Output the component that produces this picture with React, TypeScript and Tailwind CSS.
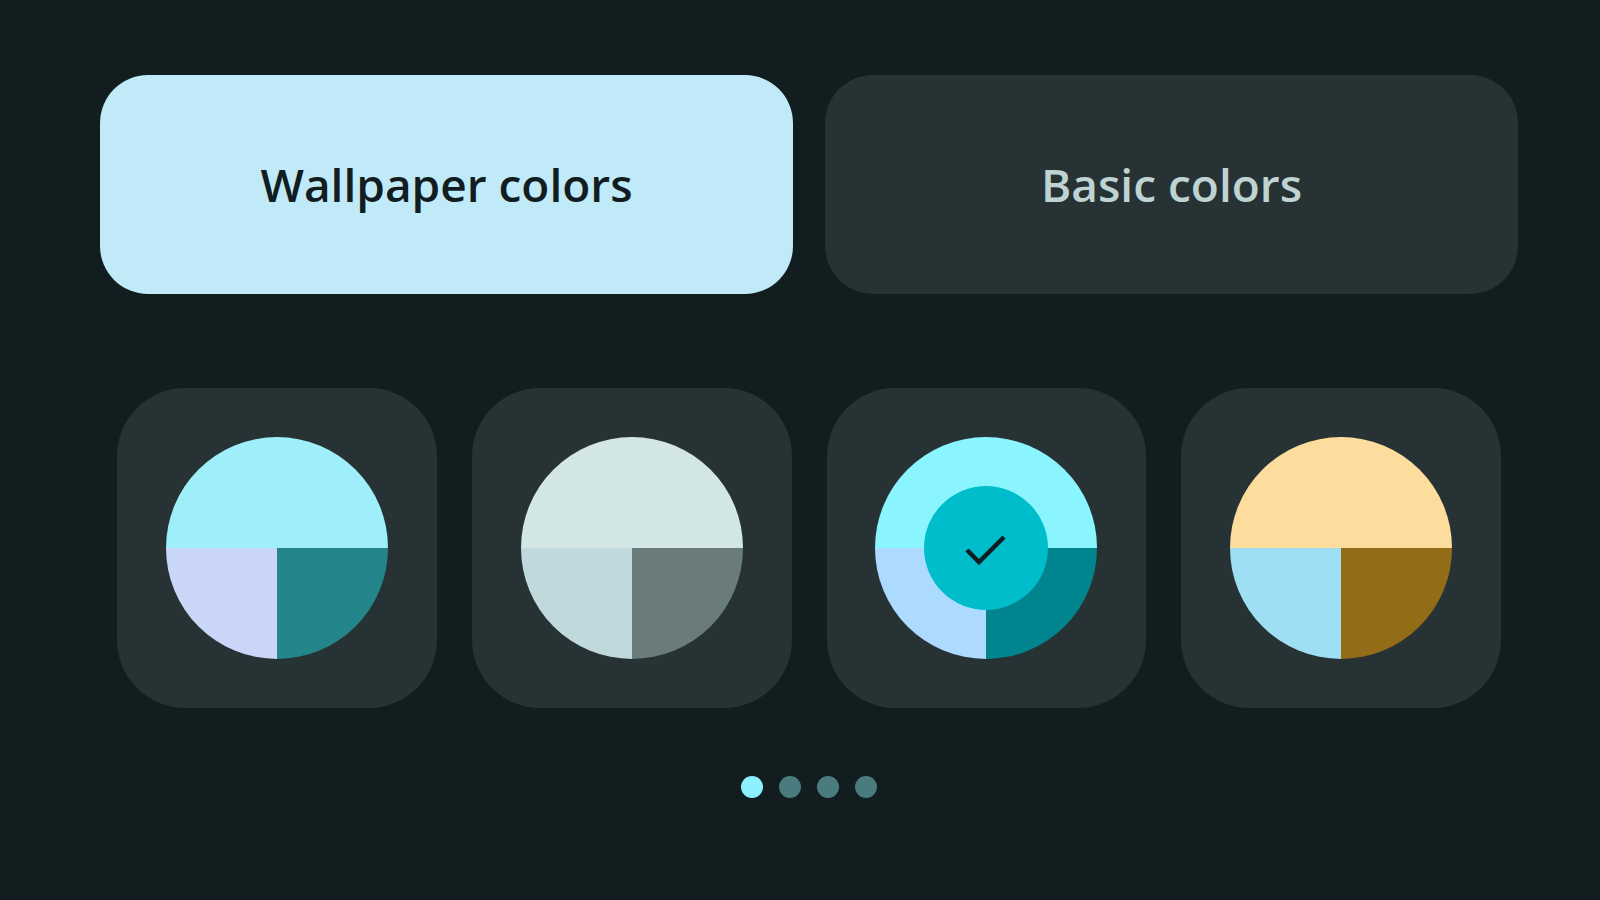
import { Fragment } from "react";

type Palette = {
  top: string;
  left: string;
  right: string;
  selected?: boolean;
};

const palettes: Palette[] = [
  { top: "#9eeff9", left: "#c9d6f8", right: "#24868a" },
  { top: "#d3e6e6", left: "#c0d9dd", right: "#6a7b7b" },
  { top: "#8bf5ff", left: "#addaff", right: "#00848d", selected: true },
  { top: "#fddd9e", left: "#9fdff3", right: "#936c18" },
];

// Split disc: upper half plus two lower quarters
const Swatch = ({ top, left, right, selected }: Palette) => {
  const r = 111;
  return (
    <svg width={222} height={222} viewBox="0 0 222 222">
      <path d={`M0 ${r} A${r} ${r} 0 0 1 ${2 * r} ${r} Z`} fill={top} />
      <path d={`M0 ${r} L${r} ${r} L${r} ${2 * r} A${r} ${r} 0 0 1 0 ${r} Z`} fill={left} />
      <path d={`M${r} ${r} L${2 * r} ${r} A${r} ${r} 0 0 1 ${r} ${2 * r} Z`} fill={right} />
      {selected && (
        <Fragment>
          <circle cx={r} cy={r} r={62} fill="#00bdcb" />
          <path
            d="M92 113 L104 125 L129 100"
            fill="none"
            stroke="#0f1e21"
            strokeWidth={4.5}
          />
        </Fragment>
      )}
    </svg>
  );
};

const App = () => {
  return (
    <div
      className="w-full h-[900px] bg-[#111d1f] pt-[75px] pl-[100px] pr-[82px] overflow-hidden"
      style={{ fontFamily: '"Open Sans", "Liberation Sans", sans-serif' }}
    >
      {/* Source tabs */}
      <div className="grid grid-cols-2 gap-[32px]">
        <button className="h-[219px] rounded-[48px] bg-[#c1eaf9] flex items-center justify-center">
          <span className="text-[46px] font-[550] text-[#111d1f]">
            Wallpaper colors
          </span>
        </button>
        <button className="h-[219px] rounded-[48px] bg-[#263234] flex items-center justify-center">
          <span className="text-[46px] font-[550] text-[#bfd3d3]">
            Basic colors
          </span>
        </button>
      </div>

      {/* Color options */}
      <div className="mt-[94px] px-[17px] flex gap-[35px]">
        {palettes.map((p, i) => (
          <div
            key={i}
            className="w-[320px] h-[320px] rounded-[68px] bg-[#263234] flex items-center justify-center"
          >
            <Swatch {...p} />
          </div>
        ))}
      </div>

      {/* Pager */}
      <div className="mt-[68px] flex justify-center gap-[16px]">
        <span className="w-[22px] h-[22px] rounded-full bg-[#8cf0ff]" />
        <span className="w-[22px] h-[22px] rounded-full bg-[#4a7b7f]" />
        <span className="w-[22px] h-[22px] rounded-full bg-[#4a7b7f]" />
        <span className="w-[22px] h-[22px] rounded-full bg-[#4a7b7f]" />
      </div>
    </div>
  );
};

export default App;
